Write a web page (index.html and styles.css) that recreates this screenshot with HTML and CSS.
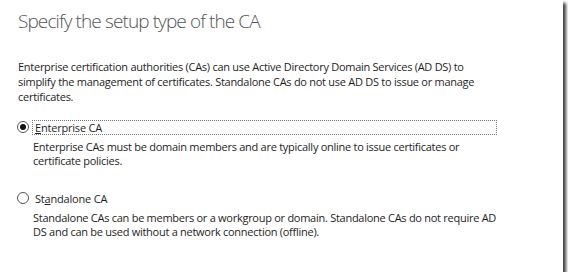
FILE: index.html
```html
<!DOCTYPE html>
<html lang="en">
<head>
    <meta charset="UTF-8">
    <meta name="viewport" content="width=device-width, initial-scale=1.0">
    <title>Setup Type</title>
    <link rel="stylesheet" href="styles.css">
</head>
<body>
    <div class="frame">
        <h1 class="title">Specify the setup type of the CA</h1>

        <p class="intro">Enterprise certification authorities (CAs) can use Active Directory Domain Services (AD DS) to simplify the management of certificates. Standalone CAs do not use AD DS to issue or manage certificates.</p>

        <div class="option">
            <div class="option-row">
                <span class="radio checked"></span>
                <span class="option-label focused"><u>E</u>nterprise CA</span>
            </div>
            <p class="option-desc">Enterprise CAs must be domain members and are typically online to issue certificates or certificate policies.</p>
        </div>

        <div class="option">
            <div class="option-row">
                <span class="radio"></span>
                <span class="option-label">St<u>a</u>ndalone CA</span>
            </div>
            <p class="option-desc">Standalone CAs can be members or a workgroup or domain. Standalone CAs do not require AD DS and can be used without a network connection (offline).</p>
        </div>
    </div>
</body>
</html>
```

FILE: styles.css
```css
body {
    margin: 0;
    background: white;
    font-family: "Open Sans", "Noto Sans", sans-serif;
}
.frame {
    width: 563px;
    height: 272px;
    padding: 0 0 0 18px;
    box-sizing: border-box;
    background: white;
    box-shadow: 3px 3px 3px rgba(0,0,0,0.75);
    overflow: hidden;
}
.title {
    margin: 0;
    padding-top: 9px;
    font-size: 19px;
    font-weight: 300;
    letter-spacing: -0.9px;
    color: #555;
    line-height: 24px;
}
.intro {
    margin: 26px 0 0 0;
    width: 466px;
    font-size: 11px;
    letter-spacing: -0.27px;
    line-height: 15px;
    color: #1e1e1e;
}
.option {
    margin-top: 15px;
}
.option + .option {
    margin-top: 22px;
}
.option-row {
    display: flex;
    align-items: center;
    height: 16px;
}
.radio {
    width: 10px;
    height: 10px;
    margin-left: -1px;
    border: 1px solid #555;
    border-radius: 50%;
    background: white;
    position: relative;
    flex: none;
}
.radio.checked::after {
    content: "";
    position: absolute;
    left: 2px;
    top: 2px;
    width: 6px;
    height: 6px;
    border-radius: 50%;
    background: #111;
}
.option-label {
    margin-left: 3px;
    padding-left: 2px;
    width: 461px;
    font-size: 11px;
    letter-spacing: -0.2px;
    line-height: 13px;
    color: #1e1e1e;
    border: 1px dotted transparent;
}
.option-label.focused {
    border-color: #777;
}
.option-desc {
    margin: 5px 0 0 15px;
    width: 475px;
    font-size: 11px;
    letter-spacing: -0.27px;
    line-height: 14px;
    color: #1e1e1e;
}
```
